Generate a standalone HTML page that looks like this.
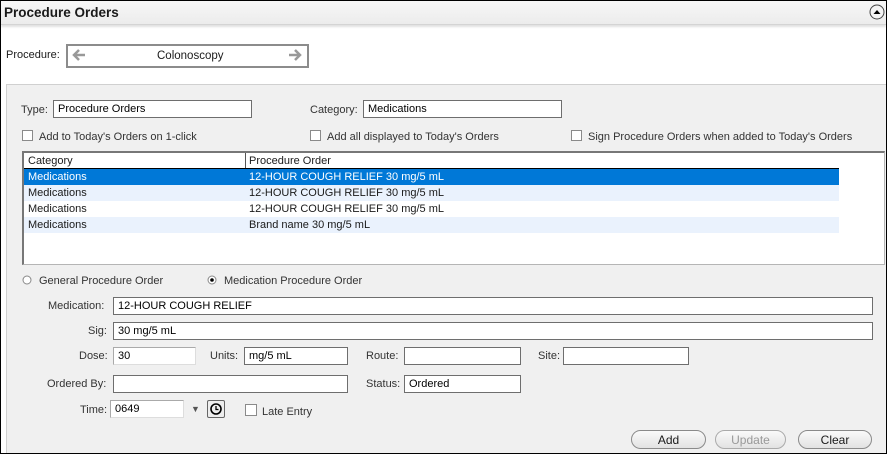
<!DOCTYPE html>
<html><head><style>
*{box-sizing:border-box;margin:0;padding:0}
body{width:887px;height:454px;position:relative;overflow:hidden;font-family:"Liberation Sans",sans-serif;font-size:11px;color:#1a1a1a;background:#fff}
.a{position:absolute}
.frame{left:0;top:0;width:887px;height:454px;border:1px solid #000}
.hdr{left:1px;top:1px;width:885px;height:24px;background:linear-gradient(#f7f7f7,#ececec);border-bottom:1px solid #d4d4d4;box-shadow:0 2px 2px rgba(0,0,0,.12)}
.in{position:absolute;background:#fff;border:1px solid #6e6e6e;height:18px;padding-left:4px;line-height:17px;font-size:11px;color:#000}
.lb{position:absolute;line-height:14px;margin-top:1px}
.cb{position:absolute;width:11px;height:11px;border:1px solid #8a8a8a;background:#fff}
.row{position:absolute;left:24px;width:815px;height:16px;line-height:17px}
.row span{position:absolute}
.btn{position:absolute;top:430px;height:19px;border:1px solid #8a8a8a;border-radius:10px;background:linear-gradient(#fafafa,#e2e2e2);text-align:center;line-height:18px;font-size:12px}
</style></head><body>
<div class="a hdr"></div>
<div class="a" style="left:4px;top:4px;font-weight:bold;font-size:13.5px;line-height:17px">Procedure Orders</div>
<svg class="a" style="left:869px;top:4px" width="16" height="16"><circle cx="8" cy="8" r="7" fill="#f4f4f4" stroke="#444"/><path d="M4.5 10 L8 6 L11.5 10Z" fill="#000"/></svg>
<div class="lb" style="left:6px;top:47px">Procedure:</div>
<div class="a" style="left:66px;top:44px;width:243px;height:24px;border:2px solid #8c8c8c;background:#fff"></div>
<svg class="a" style="left:71px;top:48px" width="16" height="14"><path d="M14 7H3M8 2L3 7L8 12" stroke="#999" stroke-width="2.5" fill="none"/></svg>
<svg class="a" style="left:287px;top:48px" width="16" height="14"><path d="M2 7H13M8 2L13 7L8 12" stroke="#999" stroke-width="2.5" fill="none"/></svg>
<div class="lb" style="left:157px;top:48px;font-size:11.5px">Colonoscopy</div>
<div class="a" style="left:6px;top:84px;width:880px;height:369px;background:#f0f0f0;border-top:1px solid #d0d0d0;border-left:1px solid #d0d0d0"></div>
<div class="lb" style="left:21px;top:102px;color:#333">Type:</div>
<div class="in" style="left:53px;top:100px;width:199px">Procedure Orders</div>
<div class="lb" style="left:310px;top:102px;color:#333">Category:</div>
<div class="in" style="left:363px;top:100px;width:199px">Medications</div>
<div class="cb" style="left:22px;top:130px"></div><div class="lb" style="left:39px;top:129px;color:#333">Add to Today's Orders on 1-click</div>
<div class="cb" style="left:310px;top:130px"></div><div class="lb" style="left:327px;top:129px;color:#333">Add all displayed to Today's Orders</div>
<div class="cb" style="left:571px;top:130px"></div><div class="lb" style="left:588px;top:129px;color:#333">Sign Procedure Orders when added to Today's Orders</div>
<div class="a" style="left:22px;top:151px;width:863px;height:114px;background:#fff;border:1px solid #b5b5b5;border-top:2px solid #777;border-left:2px solid #777"></div>
<div class="a" style="left:24px;top:168px;width:815px;height:1px;background:#000"></div>
<div class="a" style="left:245px;top:153px;width:1px;height:15px;background:#555"></div>
<div class="lb" style="left:28px;top:153px">Category</div>
<div class="lb" style="left:249px;top:153px">Procedure Order</div>
<div class="row" style="top:169px;background:#0078d7;color:#fff"><span style="left:4px">Medications</span><span style="left:225px">12-HOUR COUGH RELIEF 30 mg/5 mL</span></div>
<div class="row" style="top:185px;background:#eaf2fd"><span style="left:4px">Medications</span><span style="left:225px">12-HOUR COUGH RELIEF 30 mg/5 mL</span></div>
<div class="row" style="top:201px"><span style="left:4px">Medications</span><span style="left:225px">12-HOUR COUGH RELIEF 30 mg/5 mL</span></div>
<div class="row" style="top:217px;background:#eaf2fd"><span style="left:4px">Medications</span><span style="left:225px">Brand name 30 mg/5 mL</span></div>
<svg class="a" style="left:22px;top:275px" width="10" height="10"><circle cx="5" cy="5" r="4" fill="#fff" stroke="#888"/></svg>
<div class="lb" style="left:39px;top:273px;color:#333">General Procedure Order</div>
<svg class="a" style="left:207px;top:275px" width="10" height="10"><circle cx="5" cy="5" r="4" fill="#fff" stroke="#888"/><circle cx="5" cy="5" r="1.8" fill="#000"/></svg>
<div class="lb" style="left:224px;top:273px;color:#333">Medication Procedure Order</div>
<div class="lb" style="left:48px;top:298px;color:#333">Medication:</div>
<div class="in" style="left:113px;top:297px;width:760px">12-HOUR COUGH RELIEF</div>
<div class="lb" style="left:88px;top:323px;color:#333">Sig:</div>
<div class="in" style="left:113px;top:322px;width:760px">30 mg/5 mL</div>
<div class="lb" style="left:79px;top:348px;color:#333">Dose:</div>
<div class="in" style="left:113px;top:347px;width:83px;border-color:#aaa #ddd #ddd #aaa">30</div>
<div class="lb" style="left:210px;top:348px;color:#333">Units:</div>
<div class="in" style="left:244px;top:347px;width:104px">mg/5 mL</div>
<div class="lb" style="left:366px;top:348px;color:#333">Route:</div>
<div class="in" style="left:404px;top:347px;width:117px"></div>
<div class="lb" style="left:538px;top:348px;color:#333">Site:</div>
<div class="in" style="left:563px;top:347px;width:126px"></div>
<div class="lb" style="left:47px;top:376px;color:#333">Ordered By:</div>
<div class="in" style="left:113px;top:375px;width:235px"></div>
<div class="lb" style="left:366px;top:376px;color:#333">Status:</div>
<div class="in" style="left:404px;top:375px;width:117px">Ordered</div>
<div class="lb" style="left:80px;top:402px;color:#333">Time:</div>
<div class="in" style="left:110px;top:400px;width:74px;border-color:#aaa #ddd #ddd #aaa">0649</div>
<div class="lb" style="left:191px;top:401px;font-size:9px;color:#555">▼</div>
<div class="a" style="left:207px;top:400px;width:18px;height:18px;border:1px solid #666;border-radius:2px;background:#eee"></div>
<svg class="a" style="left:209px;top:402px" width="14" height="14"><circle cx="7" cy="7" r="5" fill="none" stroke="#000" stroke-width="1.6"/><path d="M7 4V7.5H9.5" stroke="#000" stroke-width="1.3" fill="none"/></svg>
<div class="cb" style="left:245px;top:404px;width:12px;height:12px"></div>
<div class="lb" style="left:262px;top:404px;color:#333">Late Entry</div>
<div class="btn" style="left:631px;width:75px">Add</div>
<div class="btn" style="left:715px;width:71px;color:#999;border-color:#aaa">Update</div>
<div class="btn" style="left:798px;width:74px">Clear</div>
<div class="a frame"></div>
</body></html>
